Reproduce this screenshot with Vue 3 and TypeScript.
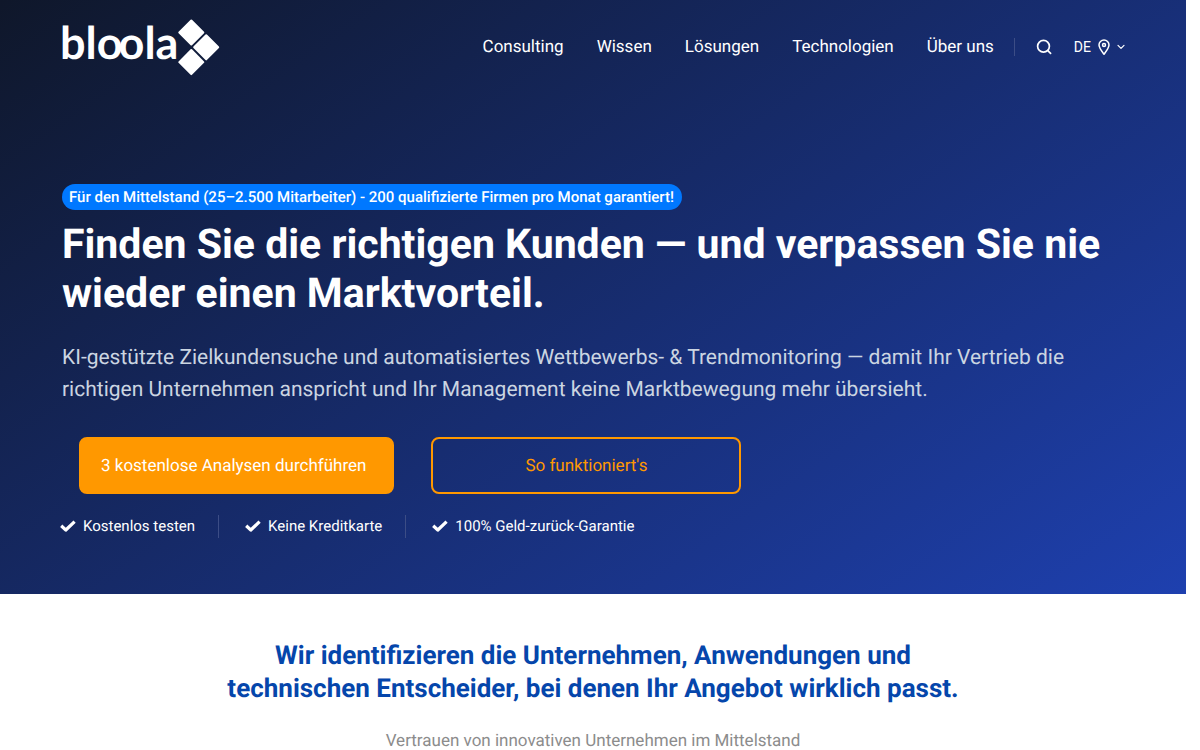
<script setup lang="ts">
const navItems: string[] = ['Consulting', 'Wissen', 'Lösungen', 'Technologien', 'Über uns']
const benefits: string[] = ['Kostenlos testen', 'Keine Kreditkarte', '100% Geld-zurück-Garantie']
</script>

<template>
  <div class="page">
    <div class="hero">
      <header class="header">
        <a class="logo" href="#" aria-label="bloola">
          <svg class="logo-mark" width="160" height="60" viewBox="0 0 160 60" aria-hidden="true">
            <text class="wordmark" x="-2" y="42">blo<tspan dx="-4">o</tspan>la</text>
            <g fill="#fff">
              <rect x="-9.500" y="-9.500" width="19" height="19" rx="1" transform="translate(129.300 15.500) rotate(45)" />
              <rect x="-9.500" y="-9.500" width="19" height="19" rx="1" transform="translate(144.200 30.300) rotate(45)" />
              <rect x="-9.500" y="-9.500" width="19" height="19" rx="1" transform="translate(129.300 45.100) rotate(45)" />
            </g>
          </svg>
        </a>
        <nav class="nav" aria-label="Hauptnavigation">
          <a v-for="item in navItems" :key="item" class="nav-link" href="#">{{ item }}</a>
        </nav>
        <div class="tools">
          <button class="tool" type="button" aria-label="Suche">
            <svg width="16" height="16" viewBox="0 0 16 16" fill="none" stroke="#fff" stroke-width="1.700" stroke-linecap="round">
              <circle cx="7.500" cy="7.300" r="5.900" />
              <path d="M11.800 11.600 14.600 14.400" />
            </svg>
          </button>
          <button class="tool language" type="button">
            <span>DE</span>
            <svg width="14" height="18" viewBox="0 0 14 18" fill="none" stroke="#fff" stroke-width="1.500" stroke-linejoin="round">
              <path d="M7 16.200C4.600 13 2 9.800 2 7a5 5 0 0 1 10 0c0 2.800-2.600 6-5 9.200Z" />
              <circle cx="7" cy="7" r="1.500" />
            </svg>
            <svg width="8" height="6" viewBox="0 0 8 6" fill="none" stroke="#fff" stroke-width="1.200" stroke-linecap="round" stroke-linejoin="round">
              <path d="M1 1.300 4 4.300 7 1.300" />
            </svg>
          </button>
        </div>
      </header>

      <main class="intro">
        <p class="badge">Für den Mittelstand (25–2.500 Mitarbeiter) - 200 qualifizierte Firmen pro Monat garantiert!</p>
        <h1 class="title">Finden Sie die richtigen Kunden — und verpassen Sie nie wieder einen Marktvorteil.</h1>
        <p class="lead">
          KI-gestützte Zielkundensuche und automatisiertes Wettbewerbs- &amp; Trendmonitoring — damit Ihr Vertrieb die
          richtigen Unternehmen anspricht und Ihr Management keine Marktbewegung mehr übersieht.
        </p>
        <div class="actions">
          <a class="button primary" href="#">3 kostenlose Analysen durchführen</a>
          <a class="button outline" href="#">So funktioniert's</a>
        </div>
        <ul class="benefits">
          <li v-for="benefit in benefits" :key="benefit" class="benefit">
            <svg width="16" height="13" viewBox="0 0 16 13" fill="none" stroke="#fff" stroke-width="3.200" stroke-linejoin="round" aria-hidden="true">
              <path d="M1.200 5.800 5.800 10 14.600 1.600" />
            </svg>
            <span>{{ benefit }}</span>
          </li>
        </ul>
      </main>
    </div>

    <section class="trust">
      <h2 class="trust-title">Wir identifizieren die Unternehmen, Anwendungen und technischen Entscheider, bei denen Ihr Angebot wirklich passt.</h2>
      <p class="trust-text">Vertrauen von innovativen Unternehmen im Mittelstand</p>
    </section>
  </div>
</template>

<style>
body {
  margin: 0;
  background: #fff;
}
</style>

<style scoped>
.page {
  margin-right: 14px;
  font-family: Roboto, "Liberation Sans", sans-serif;
  text-rendering: geometricPrecision;
}

.hero {
  padding: 0 61px 56px 62px;
  background: linear-gradient(145deg, #0f172a 0%, #1e40af 100%);
  color: #fff;
}

.header {
  display: flex;
  align-items: center;
  height: 94px;
}

.logo {
  display: flex;
  margin-right: auto;
}

.logo-mark {
  overflow: visible;
}

.wordmark {
  fill: #fff;
  font-family: Lato, sans-serif;
  font-size: 45px;
  font-weight: 700;
}

.nav {
  display: flex;
  gap: 33px;
  padding-right: 20px;
  border-right: 1px solid #3c4d86;
  line-height: 18px;
}

.nav-link {
  color: #fff;
  font-size: 17px;
  text-decoration: none;
}

.tools {
  display: flex;
  align-items: center;
  gap: 22px;
  padding-left: 21px;
}

.tool {
  display: flex;
  align-items: center;
  padding: 0;
  border: 0;
  background: none;
  color: #fff;
  font: 14px/18px Roboto, sans-serif;
}

.language {
  gap: 6px;
}

.intro {
  padding-top: 90px;
}

.badge {
  width: fit-content;
  margin: 0;
  padding: 0 8px 0 7px;
  border-radius: 13px;
  background: #0078ff;
  font-size: 15px;
  font-weight: 500;
  line-height: 26px;
}

.title {
  margin: 11px 0 0;
  font-size: 41px;
  font-weight: 700;
  line-height: 49px;
}

.lead {
  max-width: 1010px;
  margin: 23px 0 0;
  color: #cbd5e1;
  font-size: 21px;
  line-height: 32px;
}

.actions {
  display: flex;
  gap: 37px;
  margin: 31px 0 0 17px;
}

.button {
  box-sizing: border-box;
  min-width: 310px;
  padding: 17px 20px 16px;
  border: 2px solid #ff9800;
  border-radius: 8px;
  font-size: 17px;
  line-height: 20px;
  text-align: center;
  text-decoration: none;
}

.primary {
  padding-right: 26px;
  background: #ff9800;
  color: #fff;
}

.outline {
  color: #ff9800;
}

.benefits {
  display: flex;
  margin: 21px 0 0 -2px;
  padding: 0;
  list-style: none;
}

.benefit {
  display: flex;
  align-items: center;
  gap: 7px;
  margin-right: 26px;
  padding-right: 23px;
  border-right: 1px solid #3c4d86;
  font-size: 15px;
  line-height: 23px;
}

.benefit:last-child {
  margin-right: 0;
  padding-right: 0;
  border-right: 0;
}

.trust {
  padding: 46px 32px 0;
  text-align: center;
}

.trust-title {
  max-width: 760px;
  margin: 0 auto;
  color: #0546ab;
  font-size: 26px;
  font-weight: 700;
  line-height: 33px;
}

.trust-text {
  margin: 24px 0 0;
  color: #8c8c8c;
  font-size: 17px;
  line-height: 22px;
}
</style>
